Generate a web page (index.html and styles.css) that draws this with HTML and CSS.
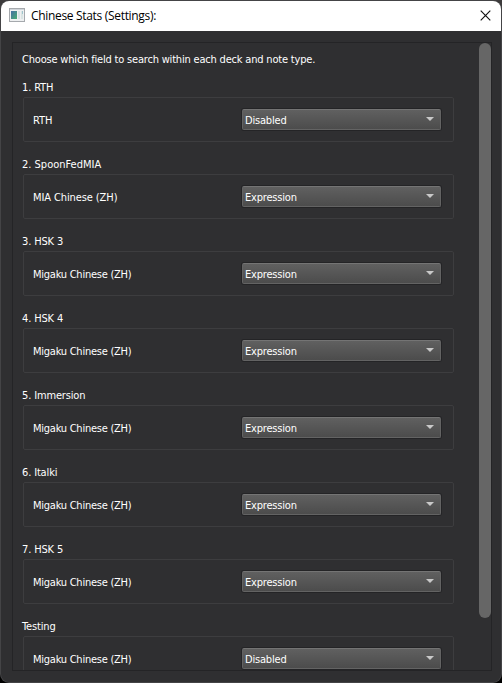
FILE: index.html
```html
<!DOCTYPE html>
<html lang="en">
<head>
<meta charset="utf-8">
<title>Chinese Stats (Settings):</title>
<link rel="stylesheet" href="styles.css">
</head>
<body>
<div class="window">
  <header class="titlebar">
    <svg class="app-icon" width="16" height="14" viewBox="0 0 16 14">
      <defs><linearGradient id="g" x1="0" y1="0" x2="1" y2="1"><stop offset="0" stop-color="#456fa5"/><stop offset="1" stop-color="#48ad72"/></linearGradient></defs>
      <rect x=".5" y=".5" width="15" height="13" fill="#eef0f1" stroke="#a5a9ad"/>
      <path d="M1 1.5h14" stroke="#d0d5da"/>
      <rect x="2" y="3" width="6" height="8" fill="url(#g)"/>
      <rect x="9" y="3" width="2" height="8" fill="#d7e1e4"/>
      <rect x="12" y="3" width="2" height="8" fill="#d9e4e3"/>
      <path d="M13.5 3v3" stroke="#9fc4cd"/>
    </svg>
    <h1 class="title"><span>Chinese Stats (Settings):</span></h1>
    <svg class="close" width="11" height="11" viewBox="0 0 11 11"><path d="M.7.7l9.6 9.6M10.3.7L.7 10.3" stroke="#111" stroke-width="1.15" fill="none"/></svg>
  </header>
  <main class="panel">
    <div class="content">
      <p class="intro">Choose which field to search within each deck and note type.</p>
      <section><h2>1. RTH</h2><div class="group"><label class="wide">RTH</label><div class="combo"><span>Disabled</span><i></i></div></div></section>
      <section><h2 class="wide">2. SpoonFedMIA</h2><div class="group"><label class="wide">MIA Chinese (ZH)</label><div class="combo"><span>Expression</span><i></i></div></div></section>
      <section><h2>3. HSK 3</h2><div class="group"><label>Migaku Chinese (ZH)</label><div class="combo"><span>Expression</span><i></i></div></div></section>
      <section><h2>4. HSK 4</h2><div class="group"><label>Migaku Chinese (ZH)</label><div class="combo"><span>Expression</span><i></i></div></div></section>
      <section><h2>5. Immersion</h2><div class="group"><label>Migaku Chinese (ZH)</label><div class="combo"><span>Expression</span><i></i></div></div></section>
      <section><h2>6. Italki</h2><div class="group"><label>Migaku Chinese (ZH)</label><div class="combo"><span>Expression</span><i></i></div></div></section>
      <section><h2>7. HSK 5</h2><div class="group"><label>Migaku Chinese (ZH)</label><div class="combo"><span>Expression</span><i></i></div></div></section>
      <section><h2>Testing</h2><div class="group"><label>Migaku Chinese (ZH)</label><div class="combo"><span>Disabled</span><i></i></div></div></section>
    </div>
    <div class="scrollbar"></div>
  </main>
</div>
</body>
</html>
```
FILE: styles.css
```css
* { box-sizing: border-box; }
html, body { margin: 0; height: 100%; }
body {
  width: 502px; height: 683px; overflow: hidden; padding: 1px;
  background: linear-gradient(#3d3b3c 0 651px, #000 651px);
  font: 11px/14px "DejaVu Sans Condensed", "DejaVu Sans", sans-serif;
  font-stretch: condensed;
  letter-spacing: -0.19px;
  color: #fff;
}
.window {
  width: 500px; height: 681px; overflow: hidden;
  display: flex; flex-direction: column;
  background: #2f2f31; border-radius: 8px;
  box-shadow: 0 0 0 1px #444446;
}
.titlebar {
  flex: none; height: 30px; display: flex; align-items: center;
  background: #fff; color: #000; padding: 0 10px 0 8px;
}
.app-icon { margin-top: -2px; }
.title {
  flex: 1; margin: 0 0 0 6px;
  font: 12px/16px "Open Sans", "Noto Sans", sans-serif;
  letter-spacing: -0.32px;
}
.close { margin-top: -2px; }
.panel {
  flex: none; width: 480px; height: 629px; margin: 11px 0 0 11px;
  border: 1px solid #242426; overflow: hidden; display: flex;
}
.content { width: 441px; padding: 10px 0 0 9px; flex: none; }
.intro { margin: 0 0 14px; height: 14px; white-space: nowrap; }
section { height: 77px; }
h2 { font-size: 11px; font-weight: 400; line-height: 14px; margin: 0 0 2px; height: 14px; letter-spacing: -0.15px; }
.group {
  width: 431px; height: 45px; margin-left: 1px; padding: 1px 12px 0 9px;
  border: 1px solid #3d3d3f; border-radius: 2px;
  display: flex; align-items: center;
}
.group label { flex: 1; padding-top: 1px; letter-spacing: -0.25px; }
h2.wide { letter-spacing: 0; }
.group label.wide { letter-spacing: -0.1px; }
.combo {
  width: 199px; height: 21px; padding: 0 6px 0 2px; margin-top: -2px;
  border: 1px solid #636363; border-top-color: #747474; border-radius: 2px;
  background: linear-gradient(#606060, #4c4c4c);
  box-shadow: 0 0 0 1px #242426;
  display: flex; align-items: center; justify-content: space-between;
}
.combo span { padding-top: 3px; }
.combo i {
  border: 4px solid transparent; border-top-color: #c9c9c9; border-bottom: 0; margin-top: -1px;
}
.scrollbar { width: 12px; height: 575px; margin-left: 25px; background: #666; border-radius: 6px; }
```
